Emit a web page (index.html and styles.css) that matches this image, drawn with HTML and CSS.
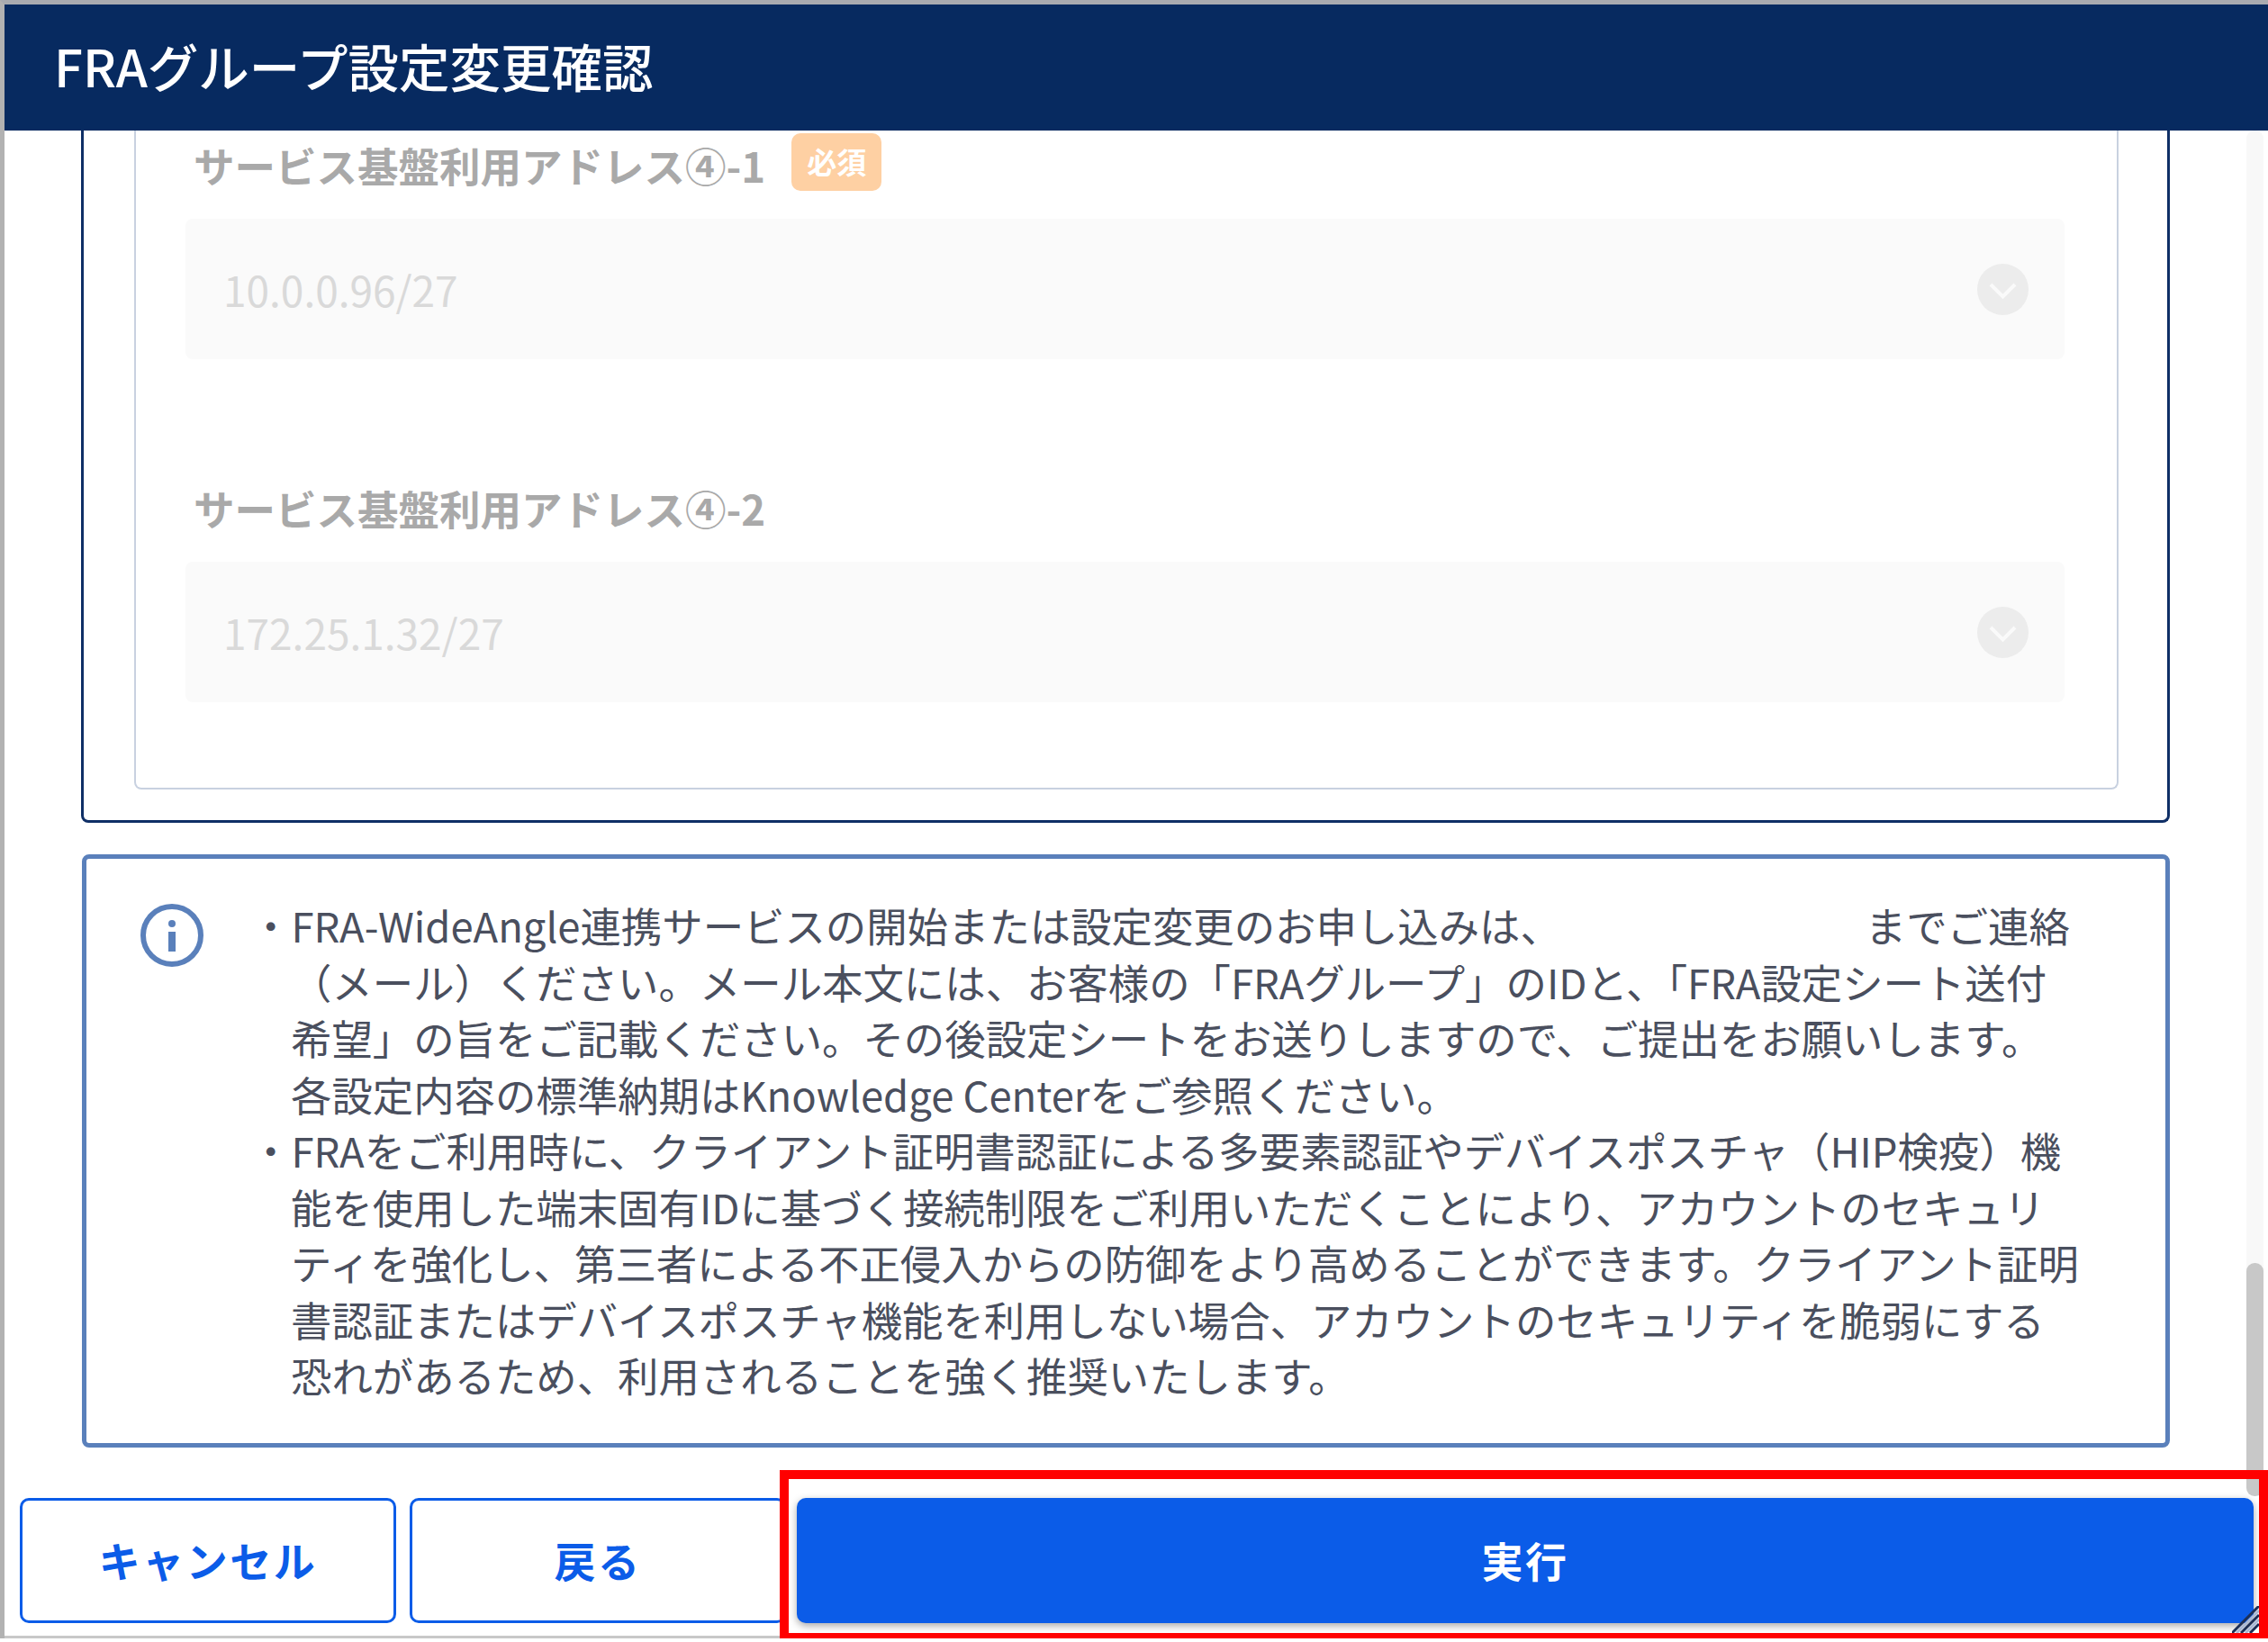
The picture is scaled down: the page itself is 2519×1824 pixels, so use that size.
FILE: index.html
```html
<!DOCTYPE html>
<html lang="ja">
<head>
    <meta charset="UTF-8">
    <title>FRAグループ設定変更確認</title>
    <link rel="stylesheet" href="styles.css">
</head>
<body>

<div class="window">
    <header class="window-header">FRAグループ設定変更確認</header>

    <div class="window-body">
        <div class="outer-box">
            <div class="inner-box">
                <div class="field">
                    <div class="field-label">
                        <span>サービス基盤利用アドレス④-1</span>
                        <span class="badge">必須</span>
                    </div>
                    <div class="select">
                        <span>10.0.0.96/27</span>
                        <svg class="chevron" viewBox="0 0 57 57"><circle cx="28.5" cy="28.5" r="28.5" fill="#ececec"/><path d="M15 23l13.500 13.500L42 23" fill="none" stroke="#fafafa" stroke-width="4"/></svg>
                    </div>
                </div>
                <div class="field">
                    <div class="field-label">
                        <span>サービス基盤利用アドレス④-2</span>
                    </div>
                    <div class="select">
                        <span>172.25.1.32/27</span>
                        <svg class="chevron" viewBox="0 0 57 57"><circle cx="28.5" cy="28.5" r="28.5" fill="#ececec"/><path d="M15 23l13.500 13.500L42 23" fill="none" stroke="#fafafa" stroke-width="4"/></svg>
                    </div>
                </div>
            </div>
        </div>

        <div class="info-box">
            <svg class="info-icon" viewBox="0 0 70 70">
                <circle cx="35" cy="35" r="32" fill="none" stroke="#5a80bb" stroke-width="6"/>
                <rect x="31" y="18" width="8" height="8" rx="4" fill="#5a80bb"/>
                <rect x="31" y="31" width="8" height="22" fill="#5a80bb"/>
            </svg>
            <ul class="info-list">
                <li>・FRA-WideAngle連携サービスの開始または設定変更のお申し込みは、<span class="blank"></span>までご連絡<br>（メール）ください。メール本文には、お客様の「FRAグループ」のIDと、「FRA設定シート送付<br>希望」の旨をご記載ください。その後設定シートをお送りしますので、ご提出をお願いします。<br>各設定内容の標準納期はKnowledge Centerをご参照ください。</li>
                <li>・FRAをご利用時に、クライアント証明書認証による多要素認証やデバイスポスチャ（HIP検疫）機<br>能を使用した端末固有IDに基づく接続制限をご利用いただくことにより、アカウントのセキュリ<br>ティを強化し、第三者による不正侵入からの防御をより高めることができます。クライアント証明<br>書認証またはデバイスポスチャ機能を利用しない場合、アカウントのセキュリティを脆弱にする<br>恐れがあるため、利用されることを強く推奨いたします。</li>
            </ul>
        </div>
    </div>

    <div class="window-footer">
        <button type="button" class="btn btn-outline">キャンセル</button>
        <button type="button" class="btn btn-outline">戻る</button>
        <button type="button" class="btn btn-primary">実行</button>
    </div>

    <!-- overlays -->
    <div class="scrollbar"><div class="scrollbar-thumb"></div></div>
    <div class="highlight"></div>
    <svg class="grip" viewBox="0 0 30 30"><path d="M0 30L30 0M10 30L30 10M20 30L30 20" stroke="#1d2f55" stroke-width="3"/><path d="M5 30L30 5M15 30L30 15" stroke="#a9b8d4" stroke-width="3"/></svg>
</div>

</body>
</html>
```

FILE: styles.css
```css
body {
    margin: 0;
    font-family: "Noto Sans CJK JP", "Noto Sans", sans-serif;
    background-color: #fff;
}

.window {
    position: relative;
    display: flex;
    flex-direction: column;
    width: 2519px;
    height: 1820px;
    box-sizing: border-box;
    border-top: 5px solid #a9abb0;
    border-left: 5px solid #b2b2b2;
}

.window-header {
    height: 140px;
    padding-left: 55px;
    line-height: 134px;
    font-size: 56.5px;
    font-weight: 500;
    color: #fff;
    background-color: #072a60;
}

.window-body {
    padding: 0 109px 0 85px;
}

.outer-box {
    padding: 0 54px 34px 56px;
    border: 3px solid #0f2f66;
    border-top: none;
    border-radius: 0 0 8px 8px;
}

.inner-box {
    padding: 2px 58px 95px 55px;
    border: 2px solid #c8d1e0;
    border-top: none;
    border-radius: 0 0 8px 8px;
}

.field + .field {
    margin-top: 129px;
}

.field-label {
    display: flex;
    align-items: flex-start;
    gap: 29px;
    height: 71px;
    margin-bottom: 25px;
    padding-left: 9px;
    font-size: 45.5px;
    font-weight: 700;
    line-height: 72px;
    color: #a9a9a9;
}

.badge {
    width: 100px;
    height: 64px;
    margin-top: 1px;
    border-radius: 10px;
    font-size: 33px;
    line-height: 62px;
    text-align: center;
    color: #fff;
    background-color: #fed0a3;
}

.select {
    display: flex;
    align-items: center;
    justify-content: space-between;
    height: 156px;
    padding: 0 40px 0 42px;
    border-radius: 8px;
    font-size: 46px;
    color: #d9d9d9;
    background-color: #fafafa;
}

.chevron {
    width: 57px;
    height: 57px;
}

.info-box {
    display: flex;
    align-items: flex-start;
    box-sizing: border-box;
    height: 659px;
    margin: 35px 0 0 1px;
    padding: 42px 40px 0 60px;
    border: 5px solid #5a80bb;
    border-radius: 8px;
}

.info-icon {
    flex: none;
    width: 70px;
    height: 70px;
    margin-top: 8px;
}

.info-list {
    margin: 0 0 0 97px;
    padding: 0;
    list-style: none;
    font-size: 45.4px;
    line-height: 62.5px;
    white-space: nowrap;
    color: #4a4f5e;
}

.info-list li {
    text-indent: -45px;
}

.blank {
    display: inline-block;
    width: 338px;
}

.window-footer {
    display: flex;
    gap: 15px;
    padding: 56px 16px 14px 17px;
    border-bottom: 3px solid #c8c8c8;
}

.btn {
    height: 139px;
    padding: 0 0 4px 0;
    border-radius: 10px;
    font-family: inherit;
    font-size: 46px;
    font-weight: 700;
    letter-spacing: 2.5px;
    cursor: pointer;
}

.btn-outline {
    width: 418px;
    border: 3px solid #0b5ce8;
    color: #0b5ce8;
    background-color: #fff;
}

.btn-primary {
    flex: 1;
    margin-left: -3px;
    border: none;
    color: #fff;
    background-color: #0b5ce8;
    box-shadow: 0 3px 8px rgba(0, 0, 0, 0.35);
}

.scrollbar {
    position: absolute;
    top: 140px;
    right: 5px;
    width: 19px;
    height: 1517px;
    border-radius: 9px;
    background-color: #f8f8f8;
}

.scrollbar-thumb {
    position: absolute;
    top: 1258px;
    width: 19px;
    height: 259px;
    border-radius: 9px;
    background-color: #c8c8c8;
}

.highlight {
    position: absolute;
    top: 1628px;
    left: 861px;
    right: 0;
    height: 191px;
    box-sizing: border-box;
    border: 10px solid #ff0000;
}

.grip {
    position: absolute;
    top: 1779px;
    right: 10px;
    width: 30px;
    height: 30px;
}
```
